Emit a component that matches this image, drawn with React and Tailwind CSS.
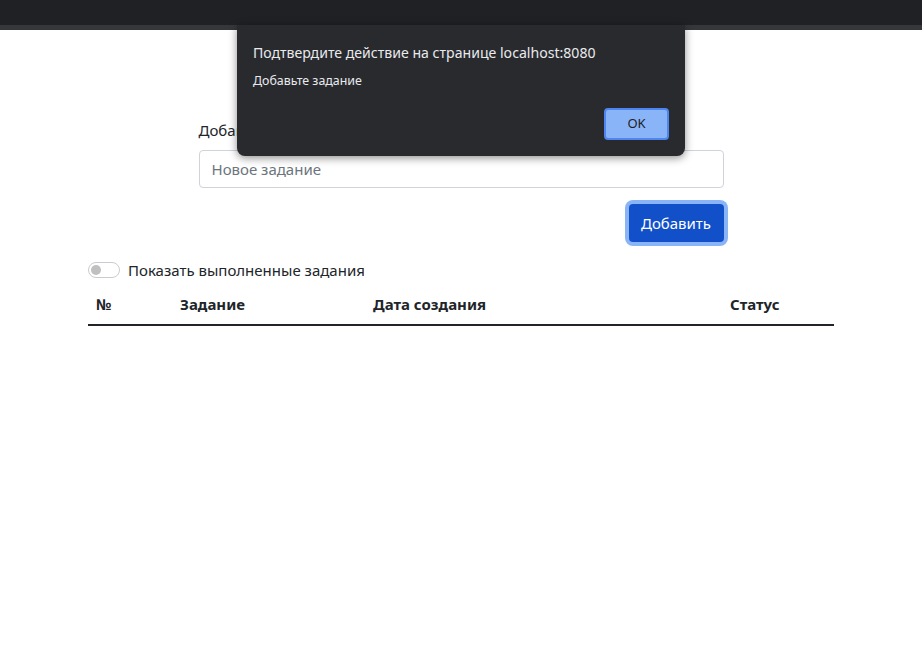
import React from 'react';

const font = { fontFamily: '"Noto Sans", "Open Sans", sans-serif' };

const ConfirmDialog = () => (
  <div className="absolute left-[237px] top-[25px] w-[448px] h-[131px] bg-[#292a2d] rounded-b-[8px] shadow-[0_2px_8px_rgba(0,0,0,0.45)] px-4 pt-[17px]">
    <div className="text-[14.1px] leading-[22px] text-[#e8eaed]">Подтвердите действие на странице localhost:8080</div>
    <div className="mt-[8px] text-[12.4px] leading-[18px] text-[#e8eaed]">Добавьте задание</div>
    <div className="flex justify-end mt-[18px]">
      <button className="w-[65px] h-[32px] rounded-[4px] bg-[#8ab4f8] border-2 border-[#4d86ee] text-[13px] text-[#202124]">OK</button>
    </div>
  </div>
);

export default function App() {
  return (
    <div className="relative min-h-[660px] bg-white text-[#212529]" style={font}>
      <div className="h-[25px] bg-[#202124]" />
      <div className="h-[5px] bg-[#36373a]" />

      <div className="w-[746px] mx-auto pt-[88px]">
        <div className="w-[525px] mx-auto">
          <label className="block text-[15px] leading-6 mb-2">Добавить задание</label>
          <input
            className="w-full h-[38px] border border-[#ced4da] rounded-[4px] px-3 text-[15px] placeholder:text-[#6c757d] outline-none"
            placeholder="Новое задание"
          />
          <div className="flex justify-end mt-[16px]">
            <button className="w-[95px] h-[38px] rounded-[4px] bg-[#1150c8] text-white text-[15px] ring-4 ring-[#8ab4f8]">Добавить</button>
          </div>
        </div>

        <div className="flex items-center gap-2 mt-[16px]">
          <span className="relative w-[32px] h-[16px] rounded-full border border-[#c8ccd0] bg-white">
            <span className="absolute left-[2px] top-[2px] w-[10px] h-[10px] rounded-full bg-[#c0c0c0]" />
          </span>
          <span className="text-[15px] leading-6">Показать выполненные задания</span>
        </div>

        <table className="w-full mt-[3px] text-[15px]">
          <thead>
            <tr className="border-b-2 border-[#212529]">
              <th className="text-left font-bold py-2 px-2 w-[84px]">№</th>
              <th className="text-left font-bold py-2 px-2 w-[193px]">Задание</th>
              <th className="text-left font-bold py-2 px-2 w-[357px]">Дата создания</th>
              <th className="text-left font-bold py-2 px-2">Статус</th>
            </tr>
          </thead>
          <tbody />
        </table>
      </div>

      <ConfirmDialog />
    </div>
  );
}
